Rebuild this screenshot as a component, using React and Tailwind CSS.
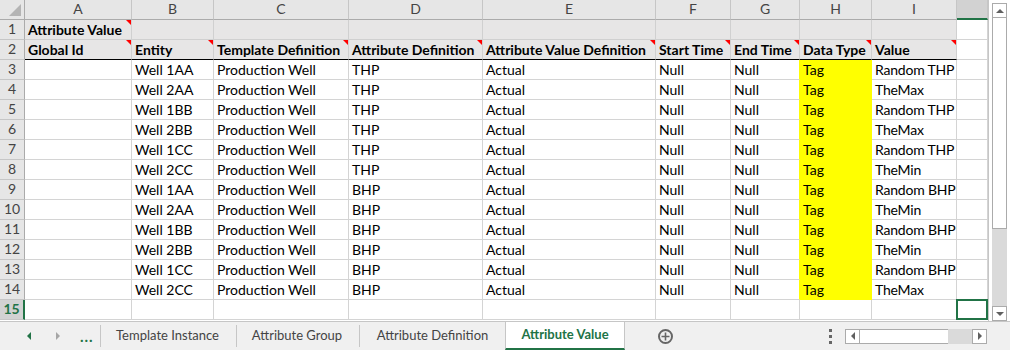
import React from 'react'

const COLS = ['A', 'B', 'C', 'D', 'E', 'F', 'G', 'H', 'I', 'J']

const HEAD = ['Global Id', 'Entity', 'Template Definition', 'Attribute Definition', 'Attribute Value Definition', 'Start Time', 'End Time', 'Data Type', 'Value']

const DATA = [
  ['Well 1AA', 'THP', 'Random THP'],
  ['Well 2AA', 'THP', 'TheMax'],
  ['Well 1BB', 'THP', 'Random THP'],
  ['Well 2BB', 'THP', 'TheMax'],
  ['Well 1CC', 'THP', 'Random THP'],
  ['Well 2CC', 'THP', 'TheMin'],
  ['Well 1AA', 'BHP', 'Random BHP'],
  ['Well 2AA', 'BHP', 'TheMin'],
  ['Well 1BB', 'BHP', 'Random BHP'],
  ['Well 2BB', 'BHP', 'TheMin'],
  ['Well 1CC', 'BHP', 'Random BHP'],
  ['Well 2CC', 'BHP', 'TheMax'],
]

const gridCols = 'grid grid-cols-[25px_107px_82px_135px_134px_173px_75px_69px_72px_85px_31px] auto-rows-[20px]'

const Flag = () => (
  <span className="absolute right-0 top-0 h-0 w-0 border-l-[5px] border-t-[5px] border-l-transparent border-t-[#ff0000]" />
)

const RowNum = ({ n, active }) => (
  <div
    className={
      active
        ? 'flex items-end justify-center border-b border-r-2 border-b-[#c6c6c6] border-r-[#217346] bg-[#d2d2d2] pb-[1px] text-[14px] font-bold leading-[18px] text-[#217346]'
        : 'flex items-end justify-center border-b border-r border-b-[#c6c6c6] border-r-[#ababab] bg-[#e6e6e6] pb-[1px] text-[14px] leading-[18px] text-[#444]'
    }
  >
    {n}
  </div>
)

const Cell = ({ children, className = '' }) => (
  <div className={`relative flex items-end overflow-visible whitespace-nowrap border-b border-r pl-[3px] text-[14px] leading-[18px] text-black ${className}`}>
    {children}
  </div>
)

const Sheet = () => {
  return (
    <div className={`${gridCols} w-[988px]`}>
      {/* column headers */}
      <div className="relative border-b border-r border-[#ababab] bg-[#e6e6e6]">
        <span className="absolute bottom-[3px] right-[3px] h-0 w-0 border-b-[12px] border-l-[12px] border-b-[#b4b4b4] border-l-transparent" />
      </div>
      {COLS.map((c) =>
        c === 'J' ? (
          <div key={c} className="border-b-2 border-r border-b-[#217346] border-r-[#c6c6c6] bg-[#d2d2d2]" />
        ) : (
          <div key={c} className="flex items-end justify-center border-b border-r border-b-[#ababab] border-r-[#c6c6c6] bg-[#e6e6e6] pb-[1px] text-[14px] leading-[18px] text-[#444]">
            {c}
          </div>
        )
      )}

      {/* row 1 */}
      <RowNum n={1} />
      <Cell className="border-[#d0d0d0] bg-[#e7e6e6] font-bold">
        Attribute Value
        <Flag />
      </Cell>
      {COLS.slice(1, 9).map((c) => (
        <Cell key={c} className="border-[#d0d0d0] bg-[#e7e6e6]" />
      ))}
      <Cell className="border-[#d4d4d4] bg-white" />

      {/* row 2 */}
      <RowNum n={2} />
      {HEAD.map((h) => (
        <Cell key={h} className="border-b-black border-r-[#d0d0d0] bg-[#e7e6e6] font-bold">
          {h}
          <Flag />
        </Cell>
      ))}
      <Cell className="border-[#d4d4d4] bg-white" />

      {/* data rows */}
      {DATA.map(([well, attr, val], i) => (
        <React.Fragment key={i}>
          <RowNum n={i + 3} />
          <Cell className="border-[#d4d4d4]" />
          <Cell className="border-[#d4d4d4]">{well}</Cell>
          <Cell className="border-[#d4d4d4]">Production Well</Cell>
          <Cell className="border-[#d4d4d4]">{attr}</Cell>
          <Cell className="border-[#d4d4d4]">Actual</Cell>
          <Cell className="border-[#d4d4d4]">Null</Cell>
          <Cell className="border-b-[#d4d4d4] border-r-[#ffff00]">Null</Cell>
          <Cell className="border-[#ffff00] bg-[#ffff00]">Tag</Cell>
          <Cell className="border-[#d4d4d4] tracking-[-0.2px]">{val}</Cell>
          <Cell className="border-[#d4d4d4]" />
        </React.Fragment>
      ))}

      {/* row 15 */}
      <RowNum n={15} active />
      {COLS.slice(0, 9).map((c) => (
        <Cell key={c} className="border-[#d4d4d4]" />
      ))}
      <Cell className="border-[#d4d4d4]">
        <span className="absolute -left-[1px] -top-[1px] h-[21px] w-[32px] border-2 border-[#217346]" />
      </Cell>
    </div>
  )
}

const VScroll = () => (
  <div className="flex w-[22px] flex-col border-l border-[#c6c6c6] bg-white px-[3px] pt-[3px]">
    <div className="flex h-[15px] items-center justify-center border border-[#ababab] bg-white">
      <span className="h-0 w-0 border-x-[4px] border-b-[4px] border-x-transparent border-b-[#606060]" />
    </div>
    <div className="h-[211px] border-x border-b border-[#ababab] bg-white" />
    <div className="flex-1 bg-[#dadada]" />
    <div className="flex h-[15px] items-center justify-center border border-[#ababab] bg-white">
      <span className="h-0 w-0 border-x-[4px] border-t-[4px] border-x-transparent border-t-[#606060]" />
    </div>
  </div>
)

const Tab = ({ children, className = '' }) => (
  <div className={`flex h-[22px] items-center justify-center text-[13px] text-[#444] ${className}`}>{children}</div>
)

const TabBar = () => (
  <div className="flex h-[28px] items-center bg-[#f0f0f0] font-['Lato',sans-serif]">
    <div className="flex h-[22px] w-[101px] items-center border-r border-[#c6c6c6]">
      <span className="ml-[27px] h-0 w-0 border-y-[4px] border-r-[4px] border-y-transparent border-r-[#217346]" />
      <span className="ml-[25px] h-0 w-0 border-y-[4px] border-l-[4px] border-y-transparent border-l-[#a6a6a6]" />
      <span className="ml-[20px] text-[15px] font-bold leading-none tracking-[1px] text-[#217346]">...</span>
    </div>
    <Tab className="w-[136px] border-r border-[#c6c6c6] pr-[2px]">Template Instance</Tab>
    <Tab className="w-[123px] border-r border-[#c6c6c6] pr-[2px]">Attribute Group</Tab>
    <Tab className="w-[145px]">Attribute Definition</Tab>
    <div className="flex h-full w-[120px] items-center justify-center border-x border-b-2 border-x-[#c6c6c6] border-b-[#217346] bg-white text-[13px] font-bold text-[#217346]">
      Attribute Value
    </div>
    <div className="ml-[33px] flex h-[15px] w-[15px] items-center justify-center rounded-full border-2 border-[#666]">
      <svg width="9" height="9" viewBox="0 0 9 9">
        <path d="M4.5 0.5v8M0.5 4.5h8" stroke="#666" strokeWidth="1.6" />
      </svg>
    </div>
    <div className="ml-[156px] flex flex-col gap-[3px]">
      <span className="h-[3px] w-[3px] bg-[#666]" />
      <span className="h-[3px] w-[3px] bg-[#666]" />
      <span className="h-[3px] w-[3px] bg-[#666]" />
    </div>
    <div className="ml-[13px] flex h-[15px] w-[142px]">
      <div className="flex w-[15px] items-center justify-center border border-[#ababab] bg-white">
        <span className="h-0 w-0 border-y-[4px] border-r-[4px] border-y-transparent border-r-[#606060]" />
      </div>
      <div className="w-[88px] border-y border-[#ababab] bg-white" />
      <div className="flex-1 bg-[#dadada]" />
      <div className="flex w-[15px] items-center justify-center border border-[#ababab] bg-white">
        <span className="h-0 w-0 border-y-[4px] border-l-[4px] border-y-transparent border-l-[#606060]" />
      </div>
    </div>
  </div>
)

export default function App() {
  return (
    <div className="flex h-[350px] w-[1010px] flex-col overflow-hidden bg-white font-['Lato',sans-serif]">
      <div className="flex h-[322px] border-b border-[#c6c6c6]">
        <Sheet />
        <VScroll />
      </div>
      <TabBar />
    </div>
  )
}
